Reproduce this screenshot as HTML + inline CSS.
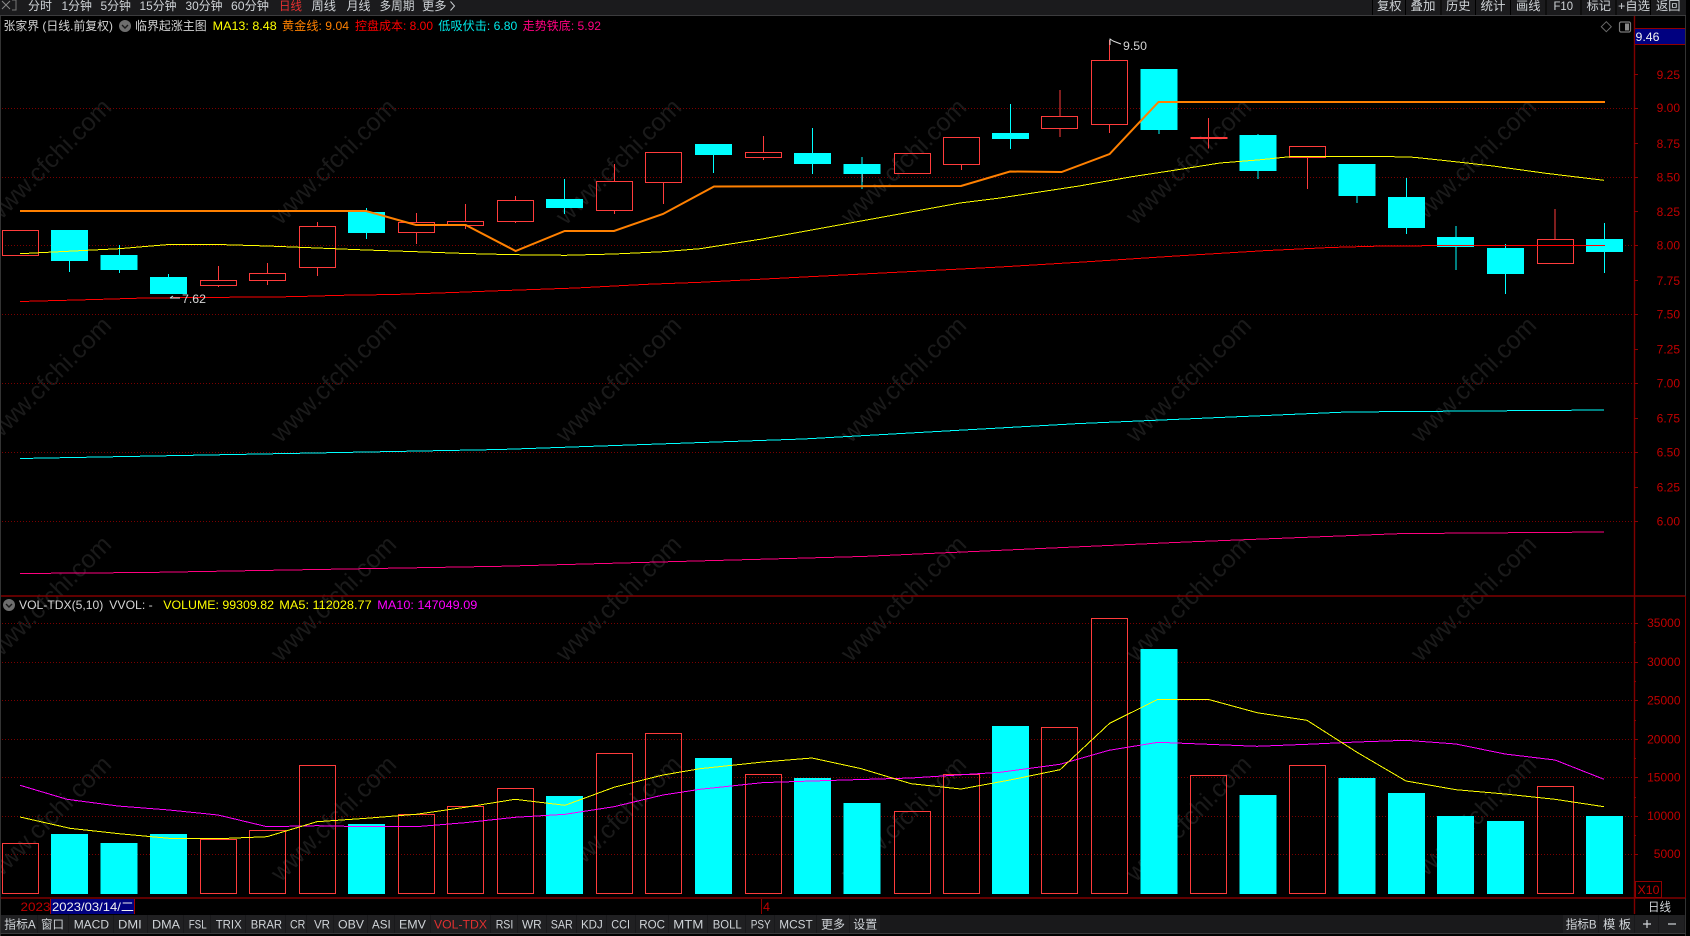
<!DOCTYPE html>
<html lang="zh"><head><meta charset="utf-8"><title>张家界</title>
<style>
html,body{margin:0;padding:0;background:#000;width:1690px;height:936px;overflow:hidden}
svg{display:block;position:absolute;left:0;top:0}
text{font-family:"Liberation Sans","Noto Sans CJK SC",sans-serif;font-size:12px;white-space:pre}
.w{font-size:25px;fill:#1a1a1a;text-anchor:middle}
.t{fill:#d4d4d4}
.a{fill:#c00000}
.b{fill:#d0d4d8}
</style></head><body>
<svg width="1690" height="936" viewBox="0 0 1690 936" xmlns="http://www.w3.org/2000/svg">
<rect width="1690" height="936" fill="#000"/>

<!-- watermark -->
<g class="wm" transform="translate(-4 4)">
<text class="w" transform="translate(52 157) rotate(-45)" dy="9">www.cfchi.com</text>
<text class="w" transform="translate(337 157) rotate(-45)" dy="9">www.cfchi.com</text>
<text class="w" transform="translate(622 157) rotate(-45)" dy="9">www.cfchi.com</text>
<text class="w" transform="translate(907 157) rotate(-45)" dy="9">www.cfchi.com</text>
<text class="w" transform="translate(1192 157) rotate(-45)" dy="9">www.cfchi.com</text>
<text class="w" transform="translate(1477 157) rotate(-45)" dy="9">www.cfchi.com</text>
<text class="w" transform="translate(52 375) rotate(-45)" dy="9">www.cfchi.com</text>
<text class="w" transform="translate(337 375) rotate(-45)" dy="9">www.cfchi.com</text>
<text class="w" transform="translate(622 375) rotate(-45)" dy="9">www.cfchi.com</text>
<text class="w" transform="translate(907 375) rotate(-45)" dy="9">www.cfchi.com</text>
<text class="w" transform="translate(1192 375) rotate(-45)" dy="9">www.cfchi.com</text>
<text class="w" transform="translate(1477 375) rotate(-45)" dy="9">www.cfchi.com</text>
<text class="w" transform="translate(52 594) rotate(-45)" dy="9">www.cfchi.com</text>
<text class="w" transform="translate(337 594) rotate(-45)" dy="9">www.cfchi.com</text>
<text class="w" transform="translate(622 594) rotate(-45)" dy="9">www.cfchi.com</text>
<text class="w" transform="translate(907 594) rotate(-45)" dy="9">www.cfchi.com</text>
<text class="w" transform="translate(1192 594) rotate(-45)" dy="9">www.cfchi.com</text>
<text class="w" transform="translate(1477 594) rotate(-45)" dy="9">www.cfchi.com</text>
<text class="w" transform="translate(52 814) rotate(-45)" dy="9">www.cfchi.com</text>
<text class="w" transform="translate(337 814) rotate(-45)" dy="9">www.cfchi.com</text>
<text class="w" transform="translate(622 814) rotate(-45)" dy="9">www.cfchi.com</text>
<text class="w" transform="translate(907 814) rotate(-45)" dy="9">www.cfchi.com</text>
<text class="w" transform="translate(1192 814) rotate(-45)" dy="9">www.cfchi.com</text>
<text class="w" transform="translate(1477 814) rotate(-45)" dy="9">www.cfchi.com</text>
</g>

<!-- grid dotted -->
<path d="M2 108.5H1634M2 177.5H1634M2 245.5H1634M2 314.5H1634M2 383.5H1634M2 452.5H1634M2 521.5H1634M2 623.5H1634M2 662.5H1634M2 700.5H1634M2 739.5H1634M2 777.5H1634M2 816.5H1634M2 854.5H1634" stroke="#7a0000" stroke-width="1" stroke-dasharray="1 2" fill="none" shape-rendering="crispEdges"/>

<!-- panel frame -->
<path d="M1 596H1686M1 898H1686" stroke="#800000" stroke-width="1.4" fill="none"/>
<path d="M1634.5 16V914" stroke="#800000" stroke-width="1.4" fill="none"/>
<path d="M1634 74.5h4M1634 108.5h4M1634 143.5h4M1634 177.5h4M1634 211.5h4M1634 245.5h4M1634 280.5h4M1634 314.5h4M1634 349.5h4M1634 383.5h4M1634 418.5h4M1634 452.5h4M1634 487.5h4M1634 521.5h4M1634 623.5h4M1634 642.5h2M1634 662.5h4M1634 681.5h2M1634 700.5h4M1634 720.5h2M1634 739.5h4M1634 758.5h2M1634 777.5h4M1634 797.5h2M1634 816.5h4M1634 835.5h2M1634 854.5h4" stroke="#900000" fill="none"/>
<path d="M0.5 16V936" stroke="#333" fill="none"/>
<path d="M1685.5 0V936" stroke="#333" fill="none"/>
<path d="M1685.5 596V898" stroke="#800000" fill="none"/>

<!-- price candles: wicks -->
<g shape-rendering="crispEdges">
<path d="M218.5 266V280M218.5 286V287M267.5 263V273M267.5 281V285M317.5 222V226M317.5 267V276M416.5 213V222M416.5 233V244M465.5 204V221M465.5 226V229M515.5 196V200M515.5 222V223M614.5 164V181M614.5 211V214M663.5 183V204M763.5 136V152M763.5 157V160M862.5 174V182M961.5 164V170M1060 90V116M1060 129V137M1109.5 40V60M1109.5 125V133M1208.5 118V148.7M1307.5 158V189M1555 209V239" stroke="#ff3c3c" stroke-width="1" fill="none"/>
<path d="M69.5 260V272M119.5 245V273M168.5 274V277M366.5 208V239M564.5 179V214M713.5 155V173M812.5 128V174M862 157V189M1010.5 104V149M1159 130V134M1258 134V179M1357 196V203M1406.5 178V234M1456 226V270M1505.5 244V294M1604.5 223V273" stroke="#00ffff" stroke-width="1" fill="none"/>
<g fill="#00ffff">
<rect x="51" y="230" width="37" height="31"/><rect x="100.5" y="255" width="37" height="15"/><rect x="150" y="277" width="37" height="17"/><rect x="348" y="212" width="37" height="21"/><rect x="546" y="199" width="37" height="9"/><rect x="695" y="144" width="37" height="11"/><rect x="794" y="153" width="37" height="11"/><rect x="843.5" y="164" width="37" height="10"/><rect x="992" y="133" width="37" height="6"/><rect x="1140.5" y="69" width="37" height="61"/><rect x="1239.5" y="135" width="37" height="36"/><rect x="1338.5" y="164" width="37" height="32"/><rect x="1388" y="197" width="37" height="31"/><rect x="1437" y="237" width="37" height="10"/><rect x="1487" y="248" width="37" height="26"/><rect x="1586" y="239" width="37" height="13"/>
</g>
<g fill="none" stroke="#ff3c3c" stroke-width="1">
<rect x="2.5" y="230.5" width="36" height="25"/><rect x="200.5" y="280.5" width="36" height="5"/><rect x="249.5" y="273.5" width="36" height="7"/><rect x="299.5" y="226.5" width="36" height="41"/><rect x="398.5" y="222.5" width="36" height="10"/><rect x="447.5" y="221.5" width="36" height="4"/><rect x="497.5" y="200.5" width="36" height="21"/><rect x="596.5" y="181.5" width="36" height="29"/><rect x="645.5" y="152.5" width="36" height="30"/><rect x="745.5" y="152.5" width="36" height="5"/><rect x="894.5" y="153.5" width="36" height="20"/><rect x="943.5" y="137.5" width="36" height="27"/><rect x="1041.5" y="116.5" width="36" height="12"/><rect x="1091.5" y="60.5" width="36" height="64"/><rect x="1289.5" y="146.5" width="36" height="11"/><rect x="1537.5" y="239.5" width="36" height="24"/>
</g>
<rect x="1190.5" y="137" width="37" height="2" fill="#ff3c3c"/>

<!-- volume bars -->
<g fill="#00ffff">
<rect x="51" y="834" width="37" height="60"/><rect x="100.5" y="843" width="37" height="51"/><rect x="150" y="834" width="37" height="60"/><rect x="348" y="824" width="37" height="70"/><rect x="546" y="796" width="37" height="98"/><rect x="695" y="758" width="37" height="136"/><rect x="794" y="778" width="37" height="116"/><rect x="843.5" y="803" width="37" height="91"/><rect x="992" y="726" width="37" height="168"/><rect x="1140.5" y="649" width="37" height="245"/><rect x="1239.5" y="795" width="37" height="99"/><rect x="1338.5" y="778" width="37" height="116"/><rect x="1388" y="793" width="37" height="101"/><rect x="1437" y="816" width="37" height="78"/><rect x="1487" y="821" width="37" height="73"/><rect x="1586" y="816" width="37" height="78"/>
</g>
<g fill="none" stroke="#ff3c3c" stroke-width="1">
<rect x="2.5" y="843.5" width="36" height="50"/><rect x="200.5" y="839.5" width="36" height="54"/><rect x="249.5" y="830.5" width="36" height="63"/><rect x="299.5" y="765.5" width="36" height="128"/><rect x="398.5" y="814.5" width="36" height="79"/><rect x="447.5" y="806.5" width="36" height="87"/><rect x="497.5" y="788.5" width="36" height="105"/><rect x="596.5" y="753.5" width="36" height="140"/><rect x="645.5" y="733.5" width="36" height="160"/><rect x="745.5" y="774.5" width="36" height="119"/><rect x="894.5" y="811.5" width="36" height="82"/><rect x="943.5" y="774.5" width="36" height="119"/><rect x="1041.5" y="727.5" width="36" height="166"/><rect x="1091.5" y="618.5" width="36" height="275"/><rect x="1190.5" y="775.5" width="36" height="118"/><rect x="1289.5" y="765.5" width="36" height="128"/><rect x="1537.5" y="786.5" width="36" height="107"/>
</g>
</g>

<!-- price lines -->
<g shape-rendering="crispEdges" fill="none" stroke-width="1">
<path d="M20 301.5L95 299.5L145 298L292 296.7L341 295.3L393 294.5L453 292.5L491 291L576 288L647 284.3L700 282.3L1000 267L1088 261.7L1176 256L1264 250.7L1330 247.5L1383 246L1431 245.7L1484 245.3L1605 245.3" stroke="#ff0000"/>
<path d="M20 253.7L119 248.7L169 244.5L218 244.5L267.6 246L317 248L366 250L416 251.7L465.7 253.5L515 254.7L565 255.3L614 254L663 251.7L700 248.7L762 239L861 221L960 203L1000 198L1079 186L1132 176.7L1176 170L1220 163L1257.5 160L1290 156.7L1334 156.3L1378.5 156.3L1414 157.3L1449 161L1493 166L1546 173.3L1604 180.3" stroke="#ffff00"/>
<path d="M20 458.5L500 449.5L803 439L1078 423.6L1347 412L1604 410" stroke="#00ffff"/>
<path d="M20 573.5L145 572.5L500 566.3L862 556.5L1186 542L1401 533.6L1604 532" stroke="#ff0080"/>
</g>
<path d="M20 211L366 211L416 225L465.7 225L515.6 251L564.7 231L614 231L663 214L714 186.5L961 186L1010 171.5L1061.6 172L1109.6 154L1158.5 102L1605 102" fill="none" stroke="#ff8000" stroke-width="2"/>

<!-- vol lines -->
<g shape-rendering="crispEdges" fill="none" stroke-width="1">
<path d="M20 785.3L67 799.3L118 806L169 810L218 815L267 826.7L317 825.7L366 826.7L416 826.7L465 822.7L515 817.3L565 814.3L614 806.7L663 795L700 789.3L763 782.6L812 781L911 778L1000 772.3L1060 764.3L1109 750.3L1158 742.3L1208 744.3L1257 746.3L1307 744.3L1357 742L1406 740.3L1456 744L1505 754L1555 760L1604 779.3" stroke="#ff00ff"/>
<path d="M20 817L70 828.3L119 833.7L169 838.3L218 838.7L267 836.7L317 821.7L366 818.3L416 814.3L465 807.3L515 799.3L565 805.3L614 787.3L663 775L700 768.7L763 762L812 758L861 768.6L911 783.7L961 789L1010 780L1060 769.7L1109.6 723.3L1158 699.3L1208 699.3L1257 712.7L1307 720.3L1357 752.3L1406 781L1456 789.7L1505 794L1555 799.3L1604 806.7" stroke="#ffff00"/>
</g>

<!-- extremes -->
<path d="M1110 45V38.5M1110 39L1113 41M1113 41L1121 44" fill="none" stroke="#e0e0e0" stroke-width="1"/>
<text x="1123" y="50" class="t" textLength="24" lengthAdjust="spacingAndGlyphs">9.50</text>
<path d="M170 298H180M170 298L173 296" fill="none" stroke="#e0e0e0" stroke-width="1"/>
<text x="182" y="303" class="t" textLength="24" lengthAdjust="spacingAndGlyphs">7.62</text>

<!-- top bar -->
<rect x="0" y="0" width="1686" height="15" fill="#1b1b1d"/>
<rect x="0" y="15" width="1686" height="1" fill="#3c3c3e"/>
<path d="M2 1L6 5L10 1M6 5L2 9M6 5L10 9" fill="none" stroke="#888" stroke-width="1"/>
<path d="M12 0H16V10H12" fill="none" stroke="#777" stroke-width="1"/>
<path d="M1372.5 0V15M1405.5 0V15M1441 0V15M1475.5 0V15M1510.5 0V15M1546 0V15M1581 0V15M1616 0V15M1650.5 0V15" stroke="#000" fill="none"/>
<g class="b">
<text x="28" y="10" textLength="24" lengthAdjust="spacingAndGlyphs">分时</text>
<text x="61.5" y="10" textLength="30.5" lengthAdjust="spacingAndGlyphs">1分钟</text>
<text x="100.5" y="10" textLength="30.5" lengthAdjust="spacingAndGlyphs">5分钟</text>
<text x="139.5" y="10" textLength="37" lengthAdjust="spacingAndGlyphs">15分钟</text>
<text x="185.5" y="10" textLength="37" lengthAdjust="spacingAndGlyphs">30分钟</text>
<text x="231" y="10" textLength="38" lengthAdjust="spacingAndGlyphs">60分钟</text>
<text x="279" y="10" textLength="23" lengthAdjust="spacingAndGlyphs" fill="#e83030">日线</text>
<text x="311.5" y="10" textLength="24.5" lengthAdjust="spacingAndGlyphs">周线</text>
<text x="346.5" y="10" textLength="24" lengthAdjust="spacingAndGlyphs">月线</text>
<text x="379.5" y="10" textLength="35" lengthAdjust="spacingAndGlyphs">多周期</text>
<text x="422" y="10" textLength="24.5" lengthAdjust="spacingAndGlyphs">更多</text>
<text x="1377" y="10" textLength="24.5" lengthAdjust="spacingAndGlyphs">复权</text>
<text x="1410.5" y="10" textLength="25" lengthAdjust="spacingAndGlyphs">叠加</text>
<text x="1446" y="10" textLength="24.5" lengthAdjust="spacingAndGlyphs">历史</text>
<text x="1480.5" y="10" textLength="25" lengthAdjust="spacingAndGlyphs">统计</text>
<text x="1516" y="10" textLength="24.5" lengthAdjust="spacingAndGlyphs">画线</text>
<text x="1553.5" y="10" textLength="19.5" lengthAdjust="spacingAndGlyphs">F10</text>
<text x="1586.5" y="10" textLength="24.5" lengthAdjust="spacingAndGlyphs">标记</text>
<text x="1618" y="10" textLength="32" lengthAdjust="spacingAndGlyphs">+自选</text>
<text x="1656" y="10" textLength="24.5" lengthAdjust="spacingAndGlyphs">返回</text>
</g>
<path d="M450.5 1.5L454.5 6L450.5 10.5" fill="none" stroke="#c8ccd0" stroke-width="1"/>

<!-- header texts -->
<text x="3.5" y="30" class="t" textLength="109.5" lengthAdjust="spacingAndGlyphs">张家界 (日线.前复权)</text>
<circle cx="125" cy="26" r="6" fill="#6e6e6e"/>
<path d="M122 25L125 28L128 25" fill="none" stroke="#1a1a1a" stroke-width="1.4"/>
<text x="135" y="30" class="t" textLength="71.7" lengthAdjust="spacingAndGlyphs">临界起涨主图</text>
<text x="212.7" y="30" fill="#ffff00" textLength="64" lengthAdjust="spacingAndGlyphs">MA13: 8.48</text>
<text x="282" y="30" fill="#ff8000" textLength="67" lengthAdjust="spacingAndGlyphs">黄金线: 9.04</text>
<text x="355" y="30" fill="#ff0000" textLength="78" lengthAdjust="spacingAndGlyphs">控盘成本: 8.00</text>
<text x="438.3" y="30" fill="#00e8e8" textLength="79" lengthAdjust="spacingAndGlyphs">低吸伏击: 6.80</text>
<text x="522.7" y="30" fill="#ff0080" textLength="78.3" lengthAdjust="spacingAndGlyphs">走势铁底: 5.92</text>

<path d="M1606.3 21.7L1611.3 26.7L1606.3 31.7L1601.3 26.7Z" fill="none" stroke="#6a6a6a" stroke-width="1"/>
<rect x="1619.5" y="22" width="11" height="10" rx="1.5" fill="none" stroke="#7a7a7a" stroke-width="1.2"/>
<rect x="1625" y="23.5" width="4" height="7" fill="#8a8a8a"/>

<!-- current price box -->
<rect x="1635" y="28.5" width="50" height="16" fill="#000080"/>
<path d="M1635 28.5H1685M1635 44.5H1685" stroke="#900000" fill="none"/>
<text x="1635.5" y="41" fill="#f0f0f0" textLength="24" lengthAdjust="spacingAndGlyphs">9.46</text>

<!-- axis labels -->
<g class="a" text-anchor="end">
<text x="1680" y="79">9.25</text><text x="1680" y="112">9.00</text><text x="1680" y="148">8.75</text><text x="1680" y="181.5">8.50</text><text x="1680" y="216">8.25</text><text x="1680" y="249.5">8.00</text><text x="1680" y="285">7.75</text><text x="1680" y="318.5">7.50</text><text x="1680" y="353.5">7.25</text><text x="1680" y="387.5">7.00</text><text x="1680" y="422.5">6.75</text><text x="1680" y="456.5">6.50</text><text x="1680" y="491.5">6.25</text><text x="1680" y="525.5">6.00</text>
<text x="1680.5" y="627">35000</text><text x="1680.5" y="666">30000</text><text x="1680.5" y="704.5">25000</text><text x="1680.5" y="743.5">20000</text><text x="1680.5" y="781.5">15000</text><text x="1680.5" y="820">10000</text><text x="1680.5" y="858">5000</text>
</g>

<!-- vol header -->
<circle cx="9" cy="605" r="6" fill="#6e6e6e"/>
<path d="M6 604L9 607L12 604" fill="none" stroke="#1a1a1a" stroke-width="1.4"/>
<text x="19" y="609" class="t" textLength="84.3" lengthAdjust="spacingAndGlyphs">VOL-TDX(5,10)</text>
<text x="109.3" y="609" class="t" textLength="43.4" lengthAdjust="spacingAndGlyphs">VVOL: -</text>
<text x="163.3" y="609" fill="#ffff00" textLength="110.7" lengthAdjust="spacingAndGlyphs">VOLUME: 99309.82</text>
<text x="279.3" y="609" fill="#ffff00" textLength="92.4" lengthAdjust="spacingAndGlyphs">MA5: 112028.77</text>
<text x="377.3" y="609" fill="#ff00ff" textLength="100" lengthAdjust="spacingAndGlyphs">MA10: 147049.09</text>

<!-- X10 -->
<rect x="1635.5" y="881.5" width="26" height="16" fill="none" stroke="#900000"/>
<text x="1637.5" y="894" fill="#c00000" textLength="22" lengthAdjust="spacingAndGlyphs">X10</text>

<!-- date row -->
<text x="20.5" y="911" fill="#c00000" textLength="30" lengthAdjust="spacingAndGlyphs">2023</text>
<rect x="50.5" y="899" width="84" height="15" fill="#000080"/>
<path d="M50.5 899V914M134.5 899V914" stroke="#a00000" fill="none"/>
<text x="52" y="911" fill="#f0f0f0" textLength="82" lengthAdjust="spacingAndGlyphs">2023/03/14/二</text>
<path d="M761.5 899V914" stroke="#900000" fill="none"/>
<text x="763" y="911" fill="#c00000" textLength="7" lengthAdjust="spacingAndGlyphs">4</text>
<text x="1648" y="911" class="b" textLength="23" lengthAdjust="spacingAndGlyphs">日线</text>

<!-- bottom toolbar -->
<rect x="1" y="915" width="1684" height="18" fill="#19191b"/>
<rect x="0" y="933" width="1686" height="1" fill="#3a3a3c"/>
<g fill="#202022" shape-rendering="crispEdges">
<rect x="1" y="915" width="36" height="18"/><rect x="38" y="915" width="30" height="18"/><rect x="69" y="915" width="44" height="18"/><rect x="114" y="915" width="33" height="18"/><rect x="148" y="915" width="35" height="18"/><rect x="184" y="915" width="26" height="18"/><rect x="211" y="915" width="34" height="18"/><rect x="246" y="915" width="39" height="18"/><rect x="286" y="915" width="20" height="18"/><rect x="307" y="915" width="26" height="18"/><rect x="334" y="915" width="33" height="18"/><rect x="368" y="915" width="26" height="18"/><rect x="395" y="915" width="35" height="18"/><rect x="431" y="915" width="59" height="18"/><rect x="491" y="915" width="26" height="18"/><rect x="518" y="915" width="28" height="18"/><rect x="547" y="915" width="29" height="18"/><rect x="577" y="915" width="29" height="18"/><rect x="607" y="915" width="28" height="18"/><rect x="636" y="915" width="32" height="18"/><rect x="669" y="915" width="38" height="18"/><rect x="708" y="915" width="37" height="18"/><rect x="746" y="915" width="28" height="18"/><rect x="775" y="915" width="41" height="18"/><rect x="817" y="915" width="32" height="18"/><rect x="850" y="915" width="30" height="18"/>
<rect x="1563" y="915" width="35" height="18"/><rect x="1599" y="915" width="35" height="18"/><rect x="1635" y="915" width="23" height="18"/><rect x="1659" y="915" width="25" height="18"/>
</g>
<g class="b">
<text x="4.3" y="928.5" textLength="31.4" lengthAdjust="spacingAndGlyphs">指标A</text>
<text x="41" y="928.5" textLength="23" lengthAdjust="spacingAndGlyphs">窗口</text>
<text x="73.7" y="928.5" textLength="35.3" lengthAdjust="spacingAndGlyphs">MACD</text>
<text x="118" y="928.5" textLength="23.7" lengthAdjust="spacingAndGlyphs">DMI</text>
<text x="152" y="928.5" textLength="28" lengthAdjust="spacingAndGlyphs">DMA</text>
<text x="188.7" y="928.5" textLength="18" lengthAdjust="spacingAndGlyphs">FSL</text>
<text x="215.7" y="928.5" textLength="26" lengthAdjust="spacingAndGlyphs">TRIX</text>
<text x="250.7" y="928.5" textLength="31.3" lengthAdjust="spacingAndGlyphs">BRAR</text>
<text x="290" y="928.5" textLength="15.3" lengthAdjust="spacingAndGlyphs">CR</text>
<text x="314" y="928.5" textLength="16" lengthAdjust="spacingAndGlyphs">VR</text>
<text x="338" y="928.5" textLength="26" lengthAdjust="spacingAndGlyphs">OBV</text>
<text x="372" y="928.5" textLength="18.7" lengthAdjust="spacingAndGlyphs">ASI</text>
<text x="399" y="928.5" textLength="27" lengthAdjust="spacingAndGlyphs">EMV</text>
<text x="434" y="928.5" textLength="53" lengthAdjust="spacingAndGlyphs" fill="#e03030">VOL-TDX</text>
<text x="495.7" y="928.5" textLength="17.6" lengthAdjust="spacingAndGlyphs">RSI</text>
<text x="522" y="928.5" textLength="19.7" lengthAdjust="spacingAndGlyphs">WR</text>
<text x="550.7" y="928.5" textLength="22" lengthAdjust="spacingAndGlyphs">SAR</text>
<text x="581" y="928.5" textLength="21.7" lengthAdjust="spacingAndGlyphs">KDJ</text>
<text x="611.3" y="928.5" textLength="18.7" lengthAdjust="spacingAndGlyphs">CCI</text>
<text x="639.3" y="928.5" textLength="25.7" lengthAdjust="spacingAndGlyphs">ROC</text>
<text x="673.3" y="928.5" textLength="30" lengthAdjust="spacingAndGlyphs">MTM</text>
<text x="712.7" y="928.5" textLength="29" lengthAdjust="spacingAndGlyphs">BOLL</text>
<text x="750.7" y="928.5" textLength="20" lengthAdjust="spacingAndGlyphs">PSY</text>
<text x="779.3" y="928.5" textLength="33.4" lengthAdjust="spacingAndGlyphs">MCST</text>
<text x="821" y="928.5" textLength="24" lengthAdjust="spacingAndGlyphs">更多</text>
<text x="853.3" y="928.5" textLength="24" lengthAdjust="spacingAndGlyphs">设置</text>
<text x="1565.7" y="928.5" textLength="31" lengthAdjust="spacingAndGlyphs">指标B</text>
<text x="1603" y="928.5" textLength="28" lengthAdjust="spacingAndGlyphs">模 板</text>
</g>
<path d="M1643 924H1651M1647 920V928" stroke="#d0d4d8" stroke-width="1.2" fill="none"/>
<path d="M1668 924H1676" stroke="#d0d4d8" stroke-width="1.2" fill="none"/>
</svg>
</body></html>
